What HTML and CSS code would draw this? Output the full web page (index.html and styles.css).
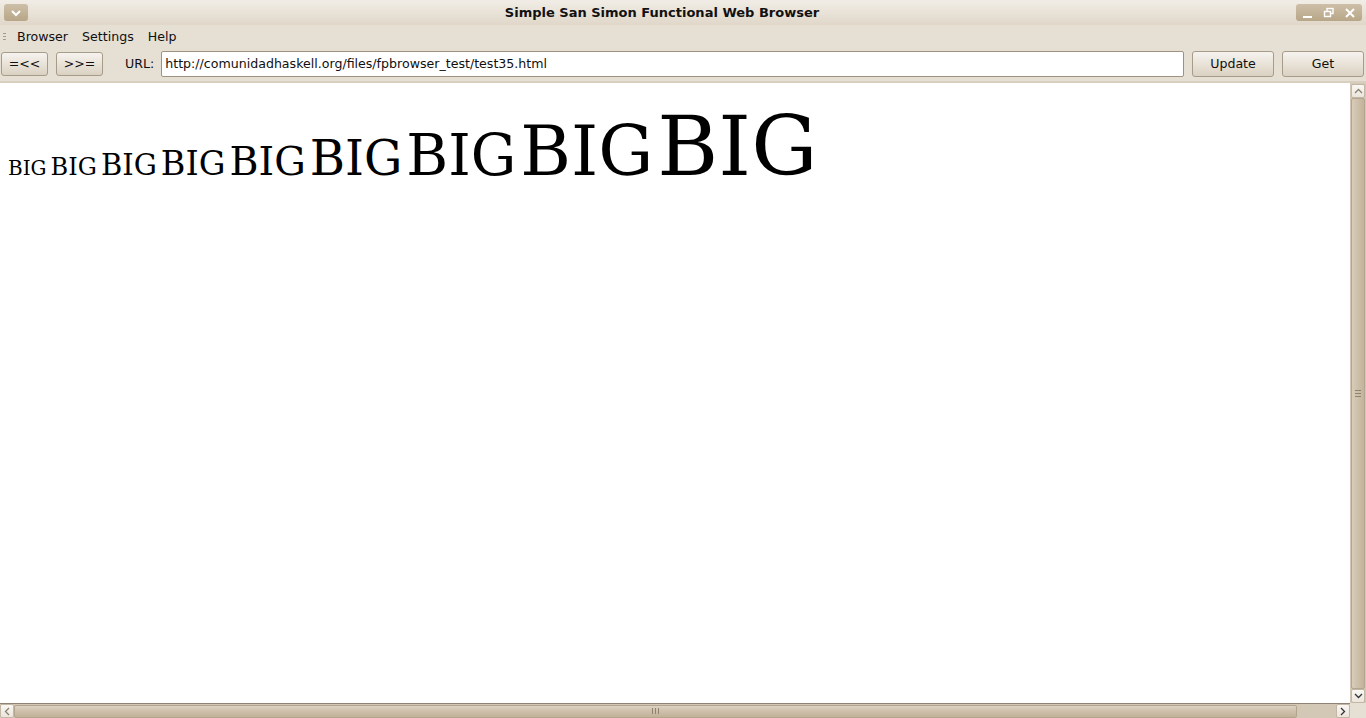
FILE: index.html
```html
<!DOCTYPE html>
<html>
<head>
<meta charset="utf-8">
<link rel="stylesheet" href="styles.css">
</head>
<body>
<div class="window">
  <div class="titlebar">
    <div class="menubtn"><svg width="12" height="8" viewBox="0 0 12 8"><path d="M2 2 L6 6 L10 2" fill="none" stroke="#fff" stroke-width="2"/></svg></div>
    <div class="title">Simple San Simon Functional Web Browser</div>
    <div class="wmbtns">
      <svg width="14" height="14" viewBox="0 0 14 14"><rect x="2" y="10" width="9" height="2" fill="#fff"/></svg>
      <svg width="14" height="14" viewBox="0 0 14 14"><rect x="5" y="2.5" width="6" height="5" fill="none" stroke="#fff" stroke-width="1.4"/><rect x="2.5" y="5.5" width="6" height="5" fill="#c2b398" stroke="#fff" stroke-width="1.4"/></svg>
      <svg width="14" height="14" viewBox="0 0 14 14"><path d="M3 3 L11 11 M11 3 L3 11" stroke="#fff" stroke-width="2"/></svg>
    </div>
  </div>
  <div class="menubar">
    <div class="grip"><i></i><i></i><i></i></div>
    <span class="mi">Browser</span>
    <span class="mi">Settings</span>
    <span class="mi">Help</span>
  </div>
  <div class="toolbar">
    <div class="btn small">=&lt;&lt;</div>
    <div class="btn small">&gt;&gt;=</div>
    <span class="label">URL:</span>
    <div class="entry">http://comunidadhaskell.org/files/fpbrowser_test/test35.html</div>
    <div class="btn wide">Update</div>
    <div class="btn wide">Get</div>
  </div>
  <div class="main">
    <div class="viewport">
      <div class="page">
        <span class="s1">BIG</span> <span class="s2">BIG</span> <span class="s3">BIG</span> <span class="s4">BIG</span> <span class="s5">BIG</span> <span class="s6">BIG</span> <span class="s7">BIG</span> <span class="s8">BIG</span> <span class="s9">BIG</span>
      </div>
    </div>
    <div class="vscroll">
      <div class="arrow"><svg width="9" height="6" viewBox="0 0 9 6"><path d="M1 5 L4.5 1.5 L8 5" fill="none" stroke="#8a8070" stroke-width="1.3"/></svg></div>
      <div class="vthumb"><div class="hgrip"><i></i><i></i><i></i></div></div>
      <div class="arrow"><svg width="9" height="6" viewBox="0 0 9 6"><path d="M1 1 L4.5 4.5 L8 1" fill="none" stroke="#333" stroke-width="1.3"/></svg></div>
    </div>
  </div>
  <div class="hbar">
    <div class="hscroll">
      <div class="arrow"><svg width="6" height="9" viewBox="0 0 6 9"><path d="M5 1 L1.5 4.5 L5 8" fill="none" stroke="#8a8070" stroke-width="1.3"/></svg></div>
      <div class="hthumb"><div class="vgrip"><i></i><i></i><i></i></div></div>
      <div class="htrack"></div>
      <div class="arrow"><svg width="6" height="9" viewBox="0 0 6 9"><path d="M1 1 L4.5 4.5 L1 8" fill="none" stroke="#333" stroke-width="1.3"/></svg></div>
    </div>
    <div class="corner"></div>
  </div>
</div>
</body>
</html>
```

FILE: styles.css
```css
html, body { margin: 0; padding: 0; }
body { width: 1366px; height: 718px; overflow: hidden; background: #e6dfd3; font-family: "DejaVu Sans", sans-serif; font-size: 12.6px; color: #101010; }
.window { display: flex; flex-direction: column; height: 718px; }
.titlebar { height: 25px; display: flex; align-items: center; background: linear-gradient(#f1ede6, #e0d7c9); position: relative; }
.menubtn { margin-left: 4px; width: 24px; height: 17px; border-radius: 3px; background: linear-gradient(#cdbfa8, #b7a687); display: flex; align-items: center; justify-content: center; }
.title { flex: 1; text-align: center; font-weight: bold; font-size: 13px; color: #111; padding-left: 0; }
.wmbtns { margin-right: 4px; width: 66px; height: 17px; border-radius: 3px; background: linear-gradient(#cdbfa8, #b7a687); display: flex; align-items: center; justify-content: space-around; padding: 0 2px; box-sizing: border-box; }
.menubar { height: 23px; display: flex; align-items: center; }
.grip { width: 4px; margin-left: 3px; margin-right: 10px; display: flex; flex-direction: column; gap: 2px; }
.grip i { display: block; width: 3px; height: 1px; background: #a59a88; }
.mi { margin-right: 14px; }
.toolbar { height: 33px; display: flex; align-items: center; padding: 0 2px 2px 1px; box-sizing: border-box; }
.btn { height: 24px; border: 1px solid #a79c8a; border-radius: 3px; background: linear-gradient(#f6f3ef, #e6dfd3 60%, #dad1c2); display: flex; align-items: center; justify-content: center; box-sizing: border-box; }
.btn.small { width: 47px; margin-right: 8px; }
.btn.wide { width: 82px; margin-left: 8px; height: 26px; }
.label { margin-left: 14px; margin-right: 7px; }
.entry { flex: 1; height: 26px; background: #fff; border: 1px solid #9d927f; border-radius: 2px; box-sizing: border-box; padding-left: 3px; display: flex; align-items: center; }
.main { flex: 1; display: flex; border-top: 2px solid #d8cfc0; min-height: 0; }
.viewport { flex: 1; background: #fff; }
.page { padding: 64px 0 0 8px; font-family: "DejaVu Serif", serif; line-height: 0; white-space: nowrap; color: #000; }
.s1 { font-size: 20px; }
.s2 { font-size: 24px; }
.s3 { font-size: 29px; }
.s4 { font-size: 33.5px; }
.s5 { font-size: 39.5px; }
.s6 { font-size: 48px; }
.s7 { font-size: 57px; }
.s8 { font-size: 69px; }
.s9 { font-size: 83px; }
.vscroll { width: 16px; background: #d3c8b6; display: flex; flex-direction: column; align-items: center; padding-top: 1px; box-sizing: border-box; }
.arrow { width: 14px; height: 14px; border: 1px solid #c3b8a6; border-radius: 2px; background: linear-gradient(#faf8f5, #ebe5dc); box-sizing: border-box; display: flex; align-items: center; justify-content: center; flex: none; }
.vthumb { flex: 1; width: 14px; background: linear-gradient(90deg, #d8ccb9, #cdbfa9 50%, #c2b39b); border: 1px solid #b3a58e; box-sizing: border-box; border-radius: 2px; display: flex; align-items: center; justify-content: center; }
.hgrip { display: flex; flex-direction: column; gap: 2px; }
.hgrip i { display: block; width: 6px; height: 1px; background: #8f836f; }
.hbar { height: 15px; display: flex; }
.hscroll { flex: 1; background: #d3c8b6; display: flex; align-items: center; border-top: 1px solid #8e8473; }
.hthumb { width: 1283px; height: 13px; background: linear-gradient(#ddd2c1, #cdbfa9 50%, #c0b199); border: 1px solid #b3a58e; box-sizing: border-box; border-radius: 2px; display: flex; align-items: center; justify-content: center; }
.vgrip { display: flex; gap: 2px; }
.vgrip i { display: block; width: 1px; height: 6px; background: #8f836f; }
.htrack { flex: 1; }
.corner { width: 16px; background: #e6dfd3; }
```
